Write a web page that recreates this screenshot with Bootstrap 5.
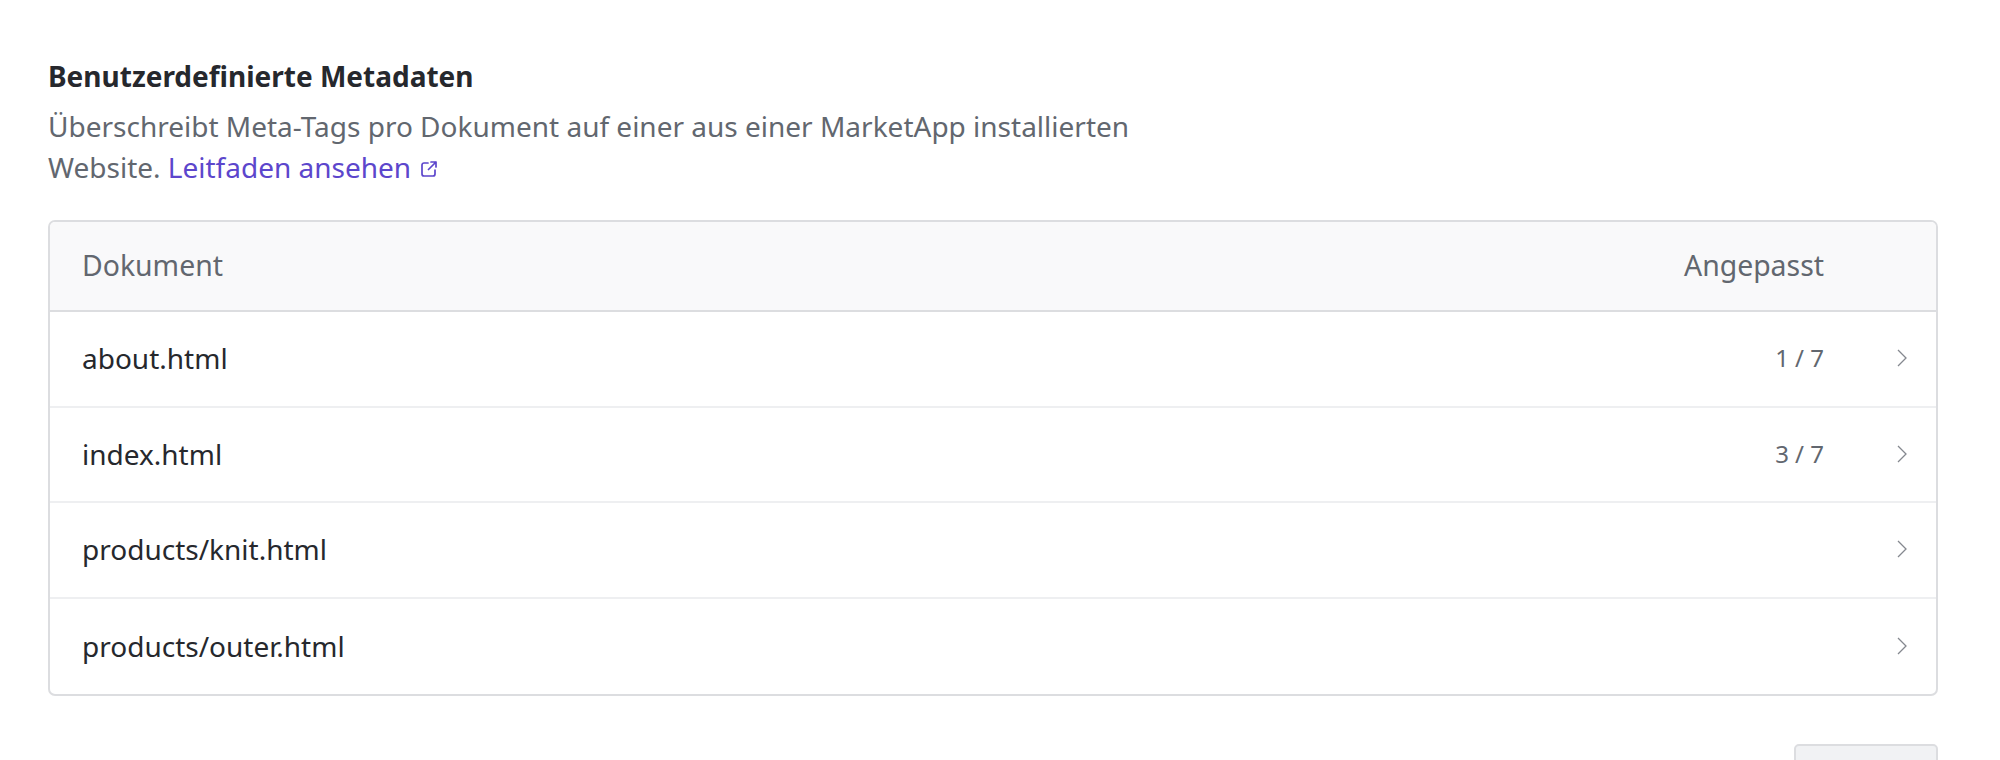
<!DOCTYPE html>
<html lang="de">
<head>
<meta charset="utf-8">
<link href="https://cdn.jsdelivr.net/npm/bootstrap@5.3.0/dist/css/bootstrap.min.css" rel="stylesheet">
<style>
html,body{height:760px;overflow:hidden;background:#fff}
body{font-family:"Noto Sans",sans-serif;color:#26282d}
.page-wrap{height:760px;overflow:hidden;padding:56px 62px 0 48px}
.sec-title{font-size:28px;font-weight:700;line-height:40px;margin:0 0 10px;color:#26282d}
.sec-desc{font-size:28px;line-height:40.5px;color:#62676f;max-width:1140px;margin:0 0 33px}
.sec-desc a{color:#5c46cc;text-decoration:none}
.ext-ico{width:16px;height:16px;margin-left:10px;vertical-align:1px}
.doc-box{border:2px solid #dcdde0;border-radius:7px;overflow:hidden}
.doc-head{height:90px;background:#f9f9fa;border-bottom:2px solid #dcdde0;font-size:28.4px;color:#62676f;padding:0 29px 2px 32px}
.doc-row{height:95.7px;font-size:28px;padding:0 29px 2px 32px;border-bottom:2px solid #eeeff1;color:#26282d}
.doc-row:last-child{border-bottom:0;height:95px}
.doc-count{font-size:24px;color:#62676f;width:160px;text-align:right}
.doc-adj{width:260px;text-align:right}
.doc-end{width:83px;display:flex;justify-content:flex-end;align-items:center}
.doc-chev{width:10px;height:18px}
.foot-btn{width:144px;height:60px;background:#f1f2f4;border:2px solid #dcdde0;border-radius:5px;margin:48px 0 0 auto}
</style>
</head>
<body>
<div class="page-wrap">
  <h2 class="sec-title">Benutzerdefinierte Metadaten</h2>
  <p class="sec-desc">Überschreibt Meta-Tags pro Dokument auf einer aus einer MarketApp installierten Website. <a href="#">Leitfaden ansehen<svg class="ext-ico" viewBox="0 0 16 16" fill="none" stroke="currentColor" stroke-width="1.700" stroke-linecap="round" stroke-linejoin="round"><path d="M7 2H3a2 2 0 0 0-2 2v9a2 2 0 0 0 2 2h9a2 2 0 0 0 2-2V9"/><path d="M10 1h5v5M15 1 7.500 8.500"/></svg></a></p>
  <div class="doc-box">
    <div class="doc-head d-flex align-items-center">
      <div class="flex-grow-1">Dokument</div><div class="doc-adj">Angepasst</div><div class="doc-end"></div>
    </div>
    <div class="doc-row d-flex align-items-center">
      <div class="flex-grow-1">about.html</div><div class="doc-count">1 / 7</div>
      <div class="doc-end"><svg class="doc-chev" viewBox="0 0 10 18" fill="none" stroke="#85888f" stroke-width="1.300"><path d="M1 1l8 8-8 8"/></svg></div>
    </div>
    <div class="doc-row d-flex align-items-center">
      <div class="flex-grow-1">index.html</div><div class="doc-count">3 / 7</div>
      <div class="doc-end"><svg class="doc-chev" viewBox="0 0 10 18" fill="none" stroke="#85888f" stroke-width="1.300"><path d="M1 1l8 8-8 8"/></svg></div>
    </div>
    <div class="doc-row d-flex align-items-center">
      <div class="flex-grow-1">products/knit.html</div>
      <div class="doc-end"><svg class="doc-chev" viewBox="0 0 10 18" fill="none" stroke="#85888f" stroke-width="1.300"><path d="M1 1l8 8-8 8"/></svg></div>
    </div>
    <div class="doc-row d-flex align-items-center">
      <div class="flex-grow-1">products/outer.html</div>
      <div class="doc-end"><svg class="doc-chev" viewBox="0 0 10 18" fill="none" stroke="#85888f" stroke-width="1.300"><path d="M1 1l8 8-8 8"/></svg></div>
    </div>
  </div>
  <div class="foot-btn"></div>
</div>
<script src="https://cdn.jsdelivr.net/npm/bootstrap@5.3.0/dist/js/bootstrap.bundle.min.js"></script>
</body>
</html>
